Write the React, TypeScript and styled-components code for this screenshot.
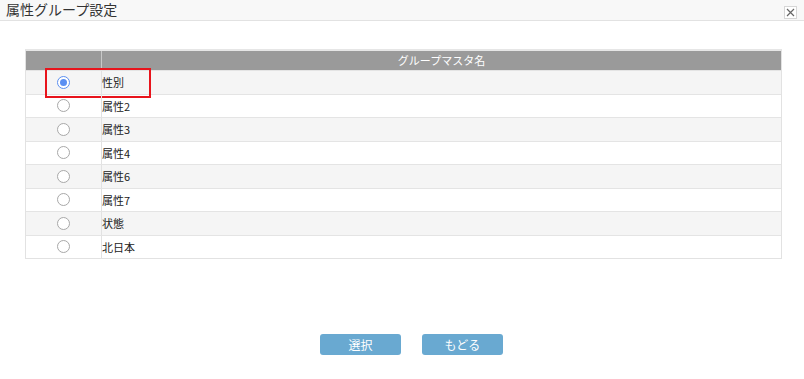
import styled, { createGlobalStyle } from "styled-components";
import { useState } from "react";

const GlobalStyle = createGlobalStyle`
  html, body {
    margin: 0;
    padding: 0;
    background: #ffffff;
    font-family: "Noto Sans CJK JP", "Noto Sans", sans-serif;
  }
`;

const Dialog = styled.div`
  width: 804px;
  height: 379px;
  background: #ffffff;
  display: flex;
  flex-direction: column;
`;

const TitleBar = styled.div`
  height: 20px;
  background: #f8f8f8;
  border-bottom: 1px solid #e2e2e2;
  display: flex;
  align-items: center;
  justify-content: space-between;
  padding: 0 7px 0 6px;
`;

const Title = styled.div`
  color: #333333;
  font-size: 14px;
  line-height: 20px;
  margin-top: -3px;
`;

const CloseButton = styled.div`
  width: 11px;
  height: 11px;
  border: 1px solid #d6d6d6;
  background: #ffffff;
  display: flex;
  align-items: center;
  justify-content: center;
  margin-top: 4px;
`;

const Body = styled.div`
  padding: 28px 23px 0 25px;
`;

const Table = styled.div`
  width: 755px;
  border: 1px solid #e2e2e2;
  border-top: 2px solid #e6e6e6;
`;

const HeaderRow = styled.div`
  display: flex;
  height: 19px;
  background: #9a9a9a;
  color: #ffffff;
  font-size: 11px;
  line-height: 19px;
`;

const Row = styled.div<{ $odd: boolean }>`
  display: flex;
  height: 23.5px;
  box-sizing: border-box;
  border-top: 1px solid #e4e4e4;
  background: ${(p) => (p.$odd ? "#f5f5f5" : "#ffffff")};
  font-size: 11px;
  color: #222222;
`;

const RadioCell = styled.div`
  position: relative;
  width: 75px;
  flex: none;
  border-right: 1px solid #e2e2e2;
  display: flex;
  align-items: center;
  justify-content: center;
`;

const HeadCell = styled.div<{ $narrow?: boolean }>`
  width: ${(p) => (p.$narrow ? "75px" : "auto")};
  flex: ${(p) => (p.$narrow ? "none" : "1")};
  border-right: ${(p) => (p.$narrow ? "1px solid #c8c8c8" : "none")};
  text-align: center;
`;

const NameCell = styled.div`
  flex: 1;
  display: flex;
  align-items: center;
`;

const Radio = styled.span<{ $checked: boolean }>`
  width: 11px;
  height: 11px;
  border-radius: 50%;
  border: 1px solid ${(p) => (p.$checked ? "#5b8ff0" : "#a8a8a8")};
  background: #ffffff;
  display: flex;
  align-items: center;
  justify-content: center;
  cursor: pointer;
  &::after {
    content: "";
    width: 7px;
    height: 7px;
    border-radius: 50%;
    background: ${(p) => (p.$checked ? "#5a8ff2" : "transparent")};
  }
`;

const Highlight = styled.div`
  position: absolute;
  left: 19px;
  top: -3px;
  width: 102px;
  height: 26px;
  border: 2px solid #e8141c;
  pointer-events: none;
`;

const Footer = styled.div`
  display: flex;
  justify-content: center;
  gap: 21px;
  margin-top: 75px;
  padding-left: 19px;
`;

const Button = styled.button`
  width: 81px;
  height: 21px;
  border: none;
  border-radius: 3px;
  background: #69a9d1;
  color: #ffffff;
  font-family: "Noto Sans CJK JP", "Noto Sans", sans-serif;
  font-size: 12px;
  line-height: 21px;
  padding: 0;
  cursor: pointer;
`;

const names = ["性別", "属性2", "属性3", "属性4", "属性6", "属性7", "状態", "北日本"];

export default function App() {
  const [selected, setSelected] = useState(0);
  return (
    <>
      <GlobalStyle />
      <Dialog>
        <TitleBar>
          <Title>属性グループ設定</Title>
          <CloseButton>
            <svg width="9" height="9" viewBox="0 0 9 9">
              <path d="M1 1L8 8M8 1L1 8" stroke="#666" strokeWidth="1.2" />
            </svg>
          </CloseButton>
        </TitleBar>
        <Body>
          <Table>
            <HeaderRow>
              <HeadCell $narrow />
              <HeadCell>グループマスタ名</HeadCell>
            </HeaderRow>
            {names.map((n, i) => (
              <Row key={n} $odd={i % 2 === 0}>
                <RadioCell>
                  <Radio $checked={selected === i} onClick={() => setSelected(i)} />
                  {i === 0 && <Highlight />}
                </RadioCell>
                <NameCell>{n}</NameCell>
              </Row>
            ))}
          </Table>
        </Body>
        <Footer>
          <Button>選択</Button>
          <Button>もどる</Button>
        </Footer>
      </Dialog>
    </>
  );
}
